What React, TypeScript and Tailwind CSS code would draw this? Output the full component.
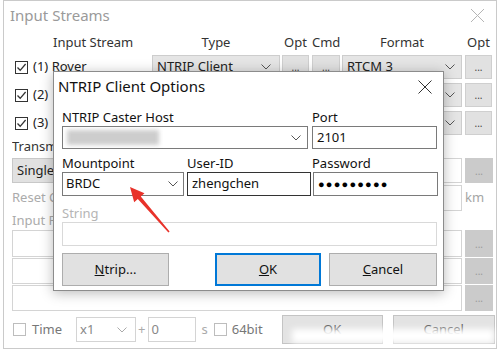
import React from "react";

const Chev = ({ c = "#555" }: { c?: string }) => (
  <svg width="10" height="6" viewBox="0 0 10 6">
    <path d="M0.5 0.5 L5 5 L9.5 0.5" fill="none" stroke={c} strokeWidth="1" />
  </svg>
);

const Check = ({ checked, light }: { checked?: boolean; light?: boolean }) => (
  <div
    className={
      "w-[13px] h-[13px] border bg-white flex items-center justify-center " +
      (light ? "border-[#bdbdbd]" : "border-[#333333]")
    }
  >
    {checked && (
      <svg width="11" height="11" viewBox="0 0 11 11">
        <path d="M1.5 5.5 L4.2 8.3 L9.6 2" fill="none" stroke="#333" strokeWidth="1.3" />
      </svg>
    )}
  </div>
);

const Dots = ({ cls }: { cls: string }) => (
  <div className={"flex items-center justify-center text-[10px] leading-none " + cls}>
    <span>...</span>
  </div>
);

const StreamRow = ({ n, name }: { n: number; name?: string }) => (
  <div className="flex h-[24px]">
    <div className="w-[140px] flex items-center">
      <div className="ml-[3px]">
        <Check checked />
      </div>
      <span className="ml-[5px] text-[13px] text-[#222]">
        ({n}){name ? " " + name : ""}
      </span>
    </div>
    <div className="w-[128px] bg-[#e5e5e5] border border-[#cdcdcd] flex items-center justify-between pl-[4px] pr-[8px]">
      <span className="text-[13px]">NTRIP Client</span>
      <Chev />
    </div>
    <Dots cls="ml-[2px] w-[27px] bg-[#e1e1e1] border border-[#cfcfcf] text-[#444]" />
    <Dots cls="ml-[3px] w-[28px] bg-[#e1e1e1] border border-[#cfcfcf] text-[#444]" />
    <div className="ml-[2px] w-[120px] bg-[#e5e5e5] border border-[#cdcdcd] flex items-center justify-between pl-[4px] pr-[6px]">
      <span className="text-[13px]">RTCM 3</span>
      <Chev />
    </div>
    <Dots cls="ml-[3px] w-[27px] bg-[#e1e1e1] border border-[#cfcfcf] text-[#444]" />
  </div>
);

const InputRow = ({ h }: { h: string }) => (
  <div className={"flex " + h}>
    <div className="w-[450px] border border-[#d4d4d4] bg-white" />
    <Dots cls="ml-[3px] w-[28px] bg-[#cbcbcb] text-[#9a9a9a]" />
  </div>
);

export default function App() {
  return (
    <div className="relative w-[500px] h-[352px] bg-white overflow-hidden font-['Noto_Sans',sans-serif] text-[13px] text-[#222]">
      {/* background window */}
      <div className="ml-[3px] w-[494px] h-[349px] border border-[#cacaca] flex flex-col">
        <div className="h-[29px] flex items-center justify-between">
          <span className="pl-[6px] text-[15px] text-[#9a9a9a]">Input Streams</span>
          <svg width="15" height="15" viewBox="0 0 15 15" className="mr-[11px]">
            <path d="M1 1 L14 14 M14 1 L1 14" stroke="#b5b5b5" strokeWidth="1" />
          </svg>
        </div>
        <div className="pl-[8px] flex flex-col">
          {/* header */}
          <div className="flex h-[25px] items-center text-[13px] text-[#333]">
            <div className="w-[140px] pl-[41px]">Input Stream</div>
            <div className="w-[128px] text-center">Type</div>
            <div className="ml-[2px] w-[27px] text-center">Opt</div>
            <div className="ml-[3px] w-[28px] text-center">Cmd</div>
            <div className="ml-[2px] w-[120px] text-center">Format</div>
            <div className="ml-[3px] w-[27px] text-center">Opt</div>
          </div>
          <div className="flex flex-col gap-[4px]">
            <StreamRow n={1} name="Rover" />
            <StreamRow n={2} />
            <StreamRow n={3} />
          </div>
          <div className="h-[23px] flex items-center text-[#333]">
            <span className="w-[41px] overflow-hidden whitespace-nowrap">Transmission</span>
          </div>
          <div className="flex h-[25px]">
            <div className="w-[100px] bg-[#e1e1e1] border border-[#c8c8c8] flex items-center pl-[4px]">
              <span className="w-[37px] overflow-hidden whitespace-nowrap">Single</span>
            </div>
            <div className="ml-[288px] w-[62px] border border-[#d4d4d4]" />
            <Dots cls="ml-[3px] w-[28px] bg-[#cbcbcb] text-[#9a9a9a]" />
          </div>
          <div className="flex h-[26px] mt-[2px] items-center">
            <div className="w-[388px] text-[#ababab]">
              <div className="w-[41px] overflow-hidden whitespace-nowrap">Reset Correction</div>
            </div>
            <div className="w-[62px] h-full border border-[#d4d4d4]" />
            <span className="ml-[3px] text-[#a5a5a5]">km</span>
          </div>
          <div className="h-[19px] flex items-center text-[#ababab]">
            <span className="w-[41px] overflow-hidden whitespace-nowrap">Input Format</span>
          </div>
          <div className="flex flex-col gap-[1px]">
            <InputRow h="h-[27px]" />
            <InputRow h="h-[26px]" />
            <InputRow h="h-[26px]" />
          </div>
          <div className="flex h-[29px] mt-[4px] items-center">
            <div className="ml-[1px]">
              <Check light />
            </div>
            <span className="ml-[6px] text-[#777]">Time</span>
            <div className="ml-[14px] w-[60px] h-[25px] border border-[#d4d4d4] flex items-center justify-between pl-[3px] pr-[8px] text-[#888]">
              <span>x1</span>
              <Chev c="#aaa" />
            </div>
            <span className="ml-[2px] text-[#aaa]">+</span>
            <div className="ml-[2px] w-[48px] h-[25px] border border-[#d4d4d4] flex items-center pl-[3px] text-[#888]">0</div>
            <span className="ml-[6px] text-[#aaa]">s</span>
            <div className="ml-[6px]">
              <Check light />
            </div>
            <span className="ml-[5px] text-[#777]">64bit</span>
            <div className="ml-[19px] w-[101px] h-[29px] bg-[#e3e3e3] border border-[#c4c4c4] flex items-center justify-center text-[#555]">
              OK
            </div>
            <div className="ml-[10px] w-[102px] h-[29px] bg-[#e3e3e3] border border-[#c4c4c4] flex items-center justify-center text-[#555]">
              Cancel
            </div>
          </div>
        </div>
      </div>

      {/* blur smudge over bottom buttons */}
      <div className="absolute left-[292px] top-[329px] w-[202px] h-[14px] bg-white blur-[3px]" />

      {/* dialog */}
      <div className="absolute left-[53px] top-[71px] w-[391px] h-[220px] bg-white border border-[#8c8c8c] shadow-[0_2px_12px_rgba(0,0,0,0.28)] flex flex-col">
        <div className="h-[29px] flex items-center justify-between">
          <span className="pl-[4px] text-[15px] text-[#111]">NTRIP Client Options</span>
          <svg width="14" height="14" viewBox="0 0 14 14" className="mr-[11px]">
            <path d="M0.5 0.5 L13.5 13.5 M13.5 0.5 L0.5 13.5" stroke="#333" strokeWidth="1" />
          </svg>
        </div>
        <div className="pl-[8px] flex flex-col text-[13px] text-[#111]">
          <div className="flex mt-[8px] h-[16px] leading-[16px]">
            <span className="w-[250px]">NTRIP Caster Host</span>
            <span>Port</span>
          </div>
          <div className="flex mt-[1px] h-[23px]">
            <div className="w-[246px] border border-[#7a7a7a] flex items-center justify-between pr-[6px]">
              <div className="ml-[4px] w-[92px] h-[15px] bg-[#cdcdcd] blur-[2px]" />
              <Chev />
            </div>
            <div className="ml-[4px] w-[125px] border border-[#7a7a7a] flex items-center pl-[4px]">2101</div>
          </div>
          <div className="flex mt-[6px] h-[16px] leading-[16px]">
            <span className="w-[125px]">Mountpoint</span>
            <span className="w-[125px]">User-ID</span>
            <span>Password</span>
          </div>
          <div className="flex mt-[1px] h-[24px]">
            <div className="w-[122px] border border-[#7a7a7a] flex items-center justify-between pl-[3px] pr-[5px]">
              <span>BRDC</span>
              <Chev />
            </div>
            <div className="ml-[3px] w-[124px] border border-[#333] flex items-center pl-[4px]">zhengchen</div>
            <div className="ml-[2px] w-[125px] border border-[#7a7a7a] flex items-center pl-[4px]">
              <span className="text-[11px] tracking-[1.2px] text-black">●●●●●●●●●</span>
            </div>
          </div>
          <div className="mt-[9px] h-[16px] leading-[16px] text-[#b5b5b5]">String</div>
          <div className="mt-[1px] h-[24px] w-[375px] border border-[#d9d9d9]" />
          <div className="flex mt-[7px] h-[33px]">
            <div className="w-[107px] bg-[#e1e1e1] border border-[#adadad] flex items-center justify-center">
              <span>
                <span className="underline">N</span>trip...
              </span>
            </div>
            <div className="ml-[46px] w-[106px] bg-[#e1e1e1] border-2 border-[#0078d7] flex items-center justify-center">
              <span>
                <span className="underline">O</span>K
              </span>
            </div>
            <div className="ml-[8px] w-[108px] bg-[#e1e1e1] border border-[#adadad] flex items-center justify-center">
              <span>
                <span className="underline">C</span>ancel
              </span>
            </div>
          </div>
        </div>
      </div>

      {/* red arrow */}
      <svg className="absolute left-0 top-0 pointer-events-none" width="500" height="352" viewBox="0 0 500 352">
        <polygon
          points="130,187 144.5,193.2 140.8,196.4 169.6,231.5 168.4,232.5 137.8,199 134.2,202.3"
          fill="#e8322a"
        />
      </svg>
    </div>
  );
}
